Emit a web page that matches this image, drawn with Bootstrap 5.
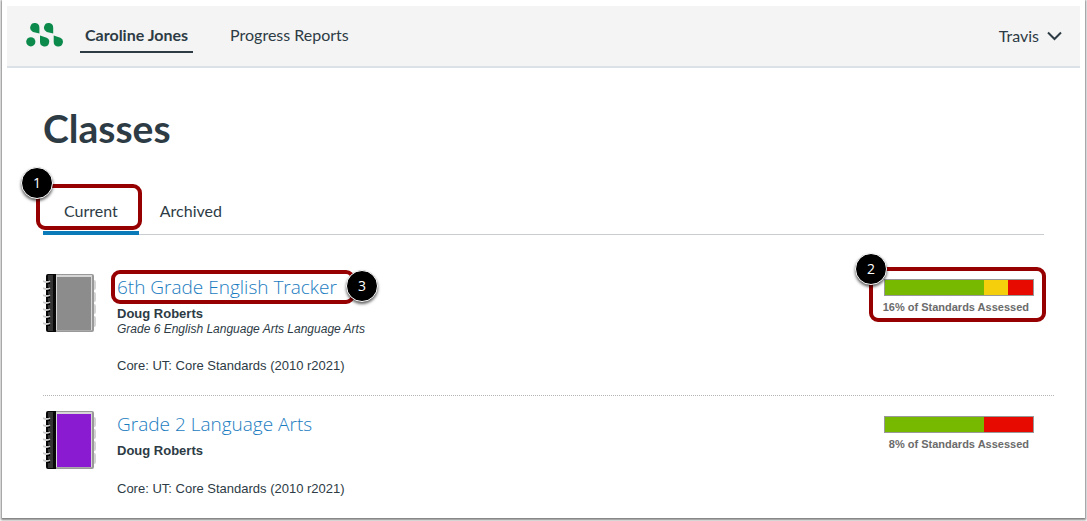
<!DOCTYPE html>
<html lang="en">
<head>
<meta charset="utf-8">
<meta name="viewport" content="width=device-width, initial-scale=1">
<title>Classes</title>
<link href="https://cdn.jsdelivr.net/npm/bootstrap@5.3.0/dist/css/bootstrap.min.css" rel="stylesheet">
<style>
  :root { --ink: #2d3b45; --edge: #dbe1e6; --note: #960000; }
  body { font-family: "Liberation Sans", Arial, sans-serif; color: var(--ink); background: #fff; font-size: 13px; line-height: 16px; }
  .frame { margin: 0 2px 3px; padding: 6px 5px 21px; box-shadow: 0 1px 2px 1px rgba(0,0,0,.5); }
  .topbar { background: #f4f4f4; border-bottom: 2px solid var(--edge); padding: 0 18px; height: 62px; font-family: Lato, sans-serif; font-size: 16px; line-height: 24px; }
  .toplink, .userbtn { color: var(--ink); text-decoration: none; }
  .topnav { margin-left: 17px; gap: 32px; }
  .toplink { padding: 4px 5px; border-bottom: 2px solid transparent; }
  .toplink.active { font-weight: 700; border-color: var(--ink); }
  .userbtn { background: none; border: 0; padding: 0; }
  .content { padding: 36px 26px 0 36px; }
  h1 { font: 700 39px/48px Lato, sans-serif; margin: 0 0 36px; }
  .tabs { font-family: Lato, sans-serif; font-size: 16px; line-height: 24px; border-bottom: 1px solid #c7cdd1; margin-right: 10px; }
  .tabs a { color: var(--ink); text-decoration: none; padding: 11px 21px 8px; border-bottom: 4px solid transparent; margin-bottom: -1px; }
  .tabs a.active { border-color: #0b7ab9; }
  .course { padding: 14px 20px 0 0; height: 136px; }
  .course + .course { border-top: 1px dotted #b5b5b5; height: auto; }
  .course .book { margin-right: 20px; }
  .course h2 { font: 300 19px/28px "Open Sans", sans-serif; margin: 0; }
  .course h2 a { color: #1a7cc0; text-decoration: none; }
  .teacher { font-weight: 700; margin-top: 5px; }
  .subject { font-style: italic; font-size: 12px; line-height: 14px; }
  .core { margin-top: 22px; }
  .score { width: 150px; margin-top: 6px; }
  .meter-bar { height: 17px; border: 1px solid #999; }
  .score p { font-size: 11px; font-weight: 700; color: #6b6b6b; text-align: right; margin: 3px 5px 0 -5px; white-space: nowrap; }
  .good { background: #77b900; } .fair { background: #f5cf0b; } .poor { background: #e60a00; }
  .ring { position: absolute; border: 4px solid var(--note); border-radius: 9px; pointer-events: none; }
  .pin { position: absolute; width: 32px; height: 32px; border-radius: 50%; border: 1px solid #fff; background: #000; color: #fff; font: 14px/30px "Open Sans", sans-serif; text-align: center; box-shadow: 0 2px 3px rgba(0,0,0,.6); pointer-events: none; z-index: 2; }
  .ring-tab { inset: -4px -3px 1px -7px; }
  .ring-title { inset: -3px -18px -3px -6px; }
  .ring-score { inset: -12px -12px -7px -15px; }
  .pin-tab { left: -22px; top: -21px; }
  .pin-score { left: -29px; top: -26px; }
  .pin-title { right: -41px; top: -3px; }
</style>
</head>
<body>
<svg width="0" height="0" class="position-absolute" aria-hidden="true">
  <symbol id="book" viewBox="0 0 54 60">
    <g fill="#d3d3d3"><rect x="47" y="7" width="6" height="10" rx="2"/><rect x="47" y="19" width="6" height="10" rx="2"/><rect x="47" y="31" width="6" height="10" rx="2"/><rect x="47" y="43" width="6" height="11" rx="2"/></g>
    <rect x="4" y="1" width="47" height="58" rx="2" fill="#999"/>
    <rect x="13" y="2" width="36" height="56" fill="#aaa"/>
    <rect x="13" y="2" width="36" height="55" fill="#d6d6d6"/>
    <rect x="14" y="4" width="34" height="53" fill="currentColor"/>
    <path d="M5 1h8v58H5q-2 0-2-2V3q0-2 2-2z" fill="#080808"/>
    <rect x="5" y="2" width="5" height="56" fill="#343434"/>
    <path d="M3 9h4M3 16h4M3 23h4M3 30h4M3 37h4M3 44h4M3 51h4" stroke="#000" stroke-width="4"/>
    <path d="M0 8q4 2 7 0M0 15q4 2 7 0M0 22q4 2 7 0M0 29q4 2 7 0M0 36q4 2 7 0M0 43q4 2 7 0M0 50q4 2 7 0" fill="none" stroke="#c9c9c9" stroke-width="1.8"/>
  </symbol>
</svg>

<div class="frame">
  <header class="topbar d-flex align-items-center">
    <a href="#" aria-label="Home" class="d-flex">
      <svg width="38" height="26" viewBox="0 0 38 26" fill="#0b8a4b">
        <circle cx="5.800" cy="18.800" r="4.600"/>
        <path d="M14.400 10.600V4.700A4.600 4.600 0 1 0 8 8.900Z"/>
        <path d="M28.200 10.600V4.700A4.600 4.600 0 1 0 21.800 8.900Z"/>
        <path d="M15 12.500V18.800A4.600 4.600 0 1 0 21.700 14.800Z"/>
        <path d="M28.700 12.500V18.800A4.600 4.600 0 1 0 35.400 14.800Z"/>
      </svg>
    </a>
    <nav class="topnav d-flex">
      <a class="toplink active" href="#">Caroline Jones</a>
      <a class="toplink" href="#">Progress Reports</a>
    </nav>
    <button class="userbtn ms-auto d-flex align-items-center gap-2" type="button">Travis
      <svg width="15" height="10" viewBox="0 0 15 10" fill="none" stroke="#2d3b45" stroke-width="2"><path d="M1 1.500 7.500 8 14 1.500"/></svg>
    </button>
  </header>

  <main class="content">
    <h1>Classes</h1>
    <nav class="tabs d-flex">
      <a class="active position-relative" href="#">Current<span class="ring ring-tab"></span><span class="pin pin-tab">1</span></a>
      <a href="#">Archived</a>
    </nav>

    <div class="pt-4">
      <article class="course d-flex">
        <svg class="book flex-shrink-0" width="54" height="60" color="#8c8c8c"><use href="#book"/></svg>
        <div class="flex-grow-1">
          <h2><a class="position-relative d-inline-block" href="#">6th Grade English Tracker<span class="ring ring-title"></span><span class="pin pin-title">3</span></a></h2>
          <div class="teacher">Doug Roberts</div>
          <div class="subject">Grade 6 English Language Arts Language Arts</div>
          <div class="core">Core: UT: Core Standards (2010 r2021)</div>
        </div>
        <div class="score position-relative align-self-start">
          <div class="meter-bar d-flex"><span class="good" style="width:66.7%"></span><span class="fair" style="width:16.6%"></span><span class="poor" style="width:16.7%"></span></div>
          <p>16% of Standards Assessed</p>
          <span class="ring ring-score"></span><span class="pin pin-score">2</span>
        </div>
      </article>
      <article class="course d-flex">
        <svg class="book flex-shrink-0" width="54" height="60" color="#8a1bd0"><use href="#book"/></svg>
        <div class="flex-grow-1">
          <h2><a class="d-inline-block" href="#">Grade 2 Language Arts</a></h2>
          <div class="teacher">Doug Roberts</div>
          <div class="core">Core: UT: Core Standards (2010 r2021)</div>
        </div>
        <div class="score">
          <div class="meter-bar d-flex"><span class="good" style="width:66.7%"></span><span class="poor" style="width:33.3%"></span></div>
          <p>8% of Standards Assessed</p>
        </div>
      </article>
    </div>
  </main>
</div>
<script src="https://cdn.jsdelivr.net/npm/bootstrap@5.3.0/dist/js/bootstrap.bundle.min.js"></script>
</body>
</html>
